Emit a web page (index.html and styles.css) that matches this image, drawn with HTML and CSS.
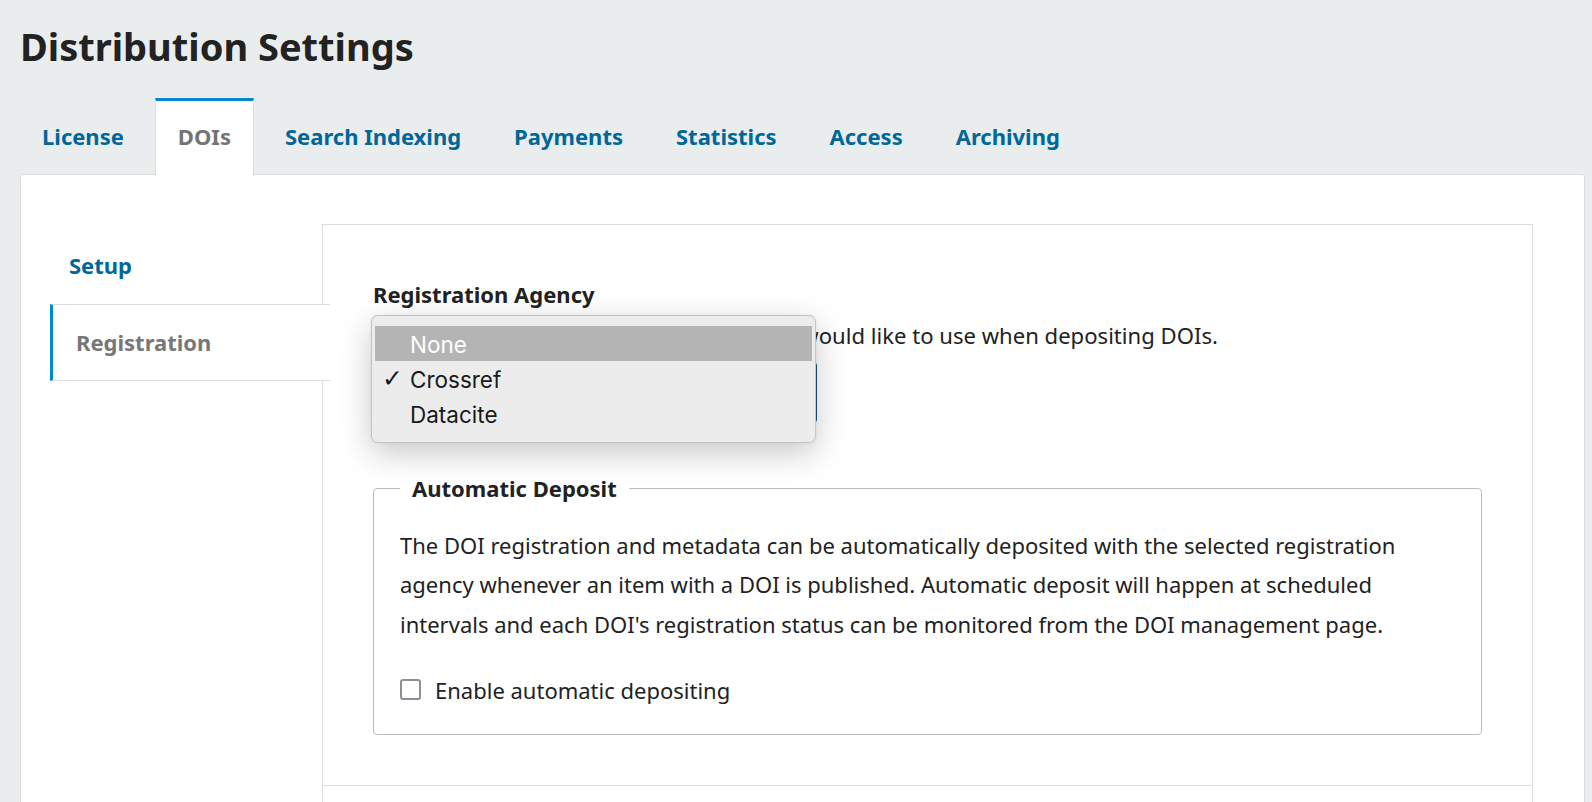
FILE: index.html
```html
<!DOCTYPE html>
<html lang="en">
<head>
<meta charset="utf-8">
<title>Distribution Settings</title>
<link rel="stylesheet" href="styles.css">
</head>
<body>
<header class="page-header">
  <h1 class="page-title">Distribution Settings</h1>
</header>
<nav class="tabs">
  <a class="tab">License</a>
  <a class="tab tab-active">DOIs</a>
  <a class="tab">Search Indexing</a>
  <a class="tab">Payments</a>
  <a class="tab">Statistics</a>
  <a class="tab">Access</a>
  <a class="tab">Archiving</a>
</nav>
<main class="panel">
  <aside class="sidenav">
    <a class="side-item">Setup</a>
    <a class="side-item side-active">Registration</a>
  </aside>
  <section class="content">
    <form class="form-body">
      <div class="field">
        <div class="field-label">Registration Agency</div>
        <p class="field-desc">Please select the registration agency you would like to use when depositing DOIs.</p>
        <div class="select-wrap">
          <div class="select">Crossref</div>
          <div class="menu">
            <div class="menu-item menu-hover"><span class="check"></span><span class="menu-text">None</span></div>
            <div class="menu-item"><span class="check">✓</span><span class="menu-text">Crossref</span></div>
            <div class="menu-item"><span class="check"></span><span class="menu-text">Datacite</span></div>
          </div>
        </div>
      </div>
      <fieldset class="fieldset">
        <legend class="legend">Automatic Deposit</legend>
        <p class="fs-desc">The DOI registration and metadata can be automatically deposited with the selected registration<br>agency whenever an item with a DOI is published. Automatic deposit will happen at scheduled<br>intervals and each DOI's registration status can be monitored from the DOI management page.</p>
        <label class="check-row"><span class="checkbox"></span>Enable automatic depositing</label>
      </fieldset>
    </form>
    <div class="form-footer"></div>
  </section>
</main>
</body>
</html>
```
FILE: styles.css
```css
* { box-sizing: border-box; }
html, body { margin: 0; padding: 0; }
body {
  background: #eaedee;
  font-family: "Noto Sans", "Open Sans", sans-serif;
  color: #222;
  height: 802px;
  overflow: hidden;
}
.page-header { padding: 24px 20px 0; }
.page-title {
  margin: 0;
  font-size: 38px;
  line-height: 45px;
  font-weight: 700;
  color: #222;
}
.tabs {
  display: flex;
  gap: 9px;
  padding: 28.5px 20px 0;
}
.tab {
  display: block;
  height: 78px;
  line-height: 71px;
  padding: 0 22px 1px;
  border-top: 3px solid transparent;
  font-size: 22px;
  font-weight: 700;
  color: #006798;
}
.tab-active {
  background: #fff;
  border-top-color: #008acb;
  border-left: 1px solid #ddd;
  border-right: 1px solid #ddd;
  padding: 0 22px 1px;
  color: #747474;
  position: relative;
  z-index: 2;
}
.panel {
  margin: -1.5px 7px 0 20px;
  background: #fff;
  border: 1px solid #ddd;
  border-radius: 3px;
  padding: 49px 51px 0 29px;
  display: flex;
  height: 700px;
  position: relative;
  z-index: 1;
}
.sidenav {
  width: 272px;
  flex: none;
  display: flex;
  flex-direction: column;
  padding-top: 3px;
}
.side-item {
  display: block;
  height: 77px;
  line-height: 77px;
  padding-left: 19px;
  font-size: 22px;
  font-weight: 700;
  color: #006798;
}
.side-active {
  margin-right: -8px;
  border-left: 3px solid #008acb;
  border-top: 1px solid #ddd;
  border-bottom: 1px solid #ddd;
  line-height: 75px;
  padding-left: 23px;
  color: #777;
  background: #fff;
  position: relative;
  z-index: 2;
}
.content {
  flex: 1;
  border: 1px solid #ddd;
  border-bottom: none;
}
.form-body {
  padding: 53px 50px 50px;
  border-bottom: 1px solid #ddd;
}
.field-label {
  font-size: 22px;
  font-weight: 700;
  line-height: 32px;
}
.field-desc {
  margin: 8.5px 0 11.5px;
  font-size: 22.1px;
  line-height: 32px;
}
.select-wrap { position: relative; }
.select {
  width: 444px;
  height: 61px;
  border: 2px solid #1d4f6e;
  border-radius: 4px;
  padding: 0 18px;
  line-height: 57px;
  font-size: 22px;
}
.menu {
  position: absolute;
  left: -2px;
  top: -47px;
  width: 445px;
  padding: 10px 3px 11px;
  background: #ececec;
  border: 1px solid #c4c4c4;
  border-radius: 7px;
  box-shadow: 0 10px 32px rgba(0,0,0,0.22), 0 0 2px rgba(0,0,0,0.1);
  font-family: Inter, "Liberation Sans", sans-serif;
  font-size: 22.5px;
  color: #1a1a1a;
}
.menu-item {
  height: 35px;
  line-height: 35px;
  display: flex;
}
.menu-text { padding-top: 1px; }
.menu-hover {
  background: #b4b4b4;
  color: #fff;
}
.check {
  width: 35px;
  padding-left: 7px;
  font-family: "DejaVu Sans", sans-serif;
  font-size: 25px;
  line-height: 35px;
}
.fieldset {
  margin: 50px 0 0;
  border: 1px solid #bbb;
  border-radius: 4px;
  padding: 22.8px 26px 24.5px;
}
.legend {
  padding: 0 12px;
  font-size: 22px;
  font-weight: 700;
  line-height: 30px;
}
.fs-desc {
  margin: 0;
  font-size: 22px;
  line-height: 39.6px;
}
.check-row {
  display: flex;
  align-items: center;
  gap: 14px;
  height: 40px;
  margin-top: 25.4px;
  font-size: 22px;
}
.checkbox {
  width: 21px;
  height: 21px;
  border: 2px solid #8e8e96;
  border-radius: 3px;
  background: #fff;
}
.form-footer { height: 60px; }
```
